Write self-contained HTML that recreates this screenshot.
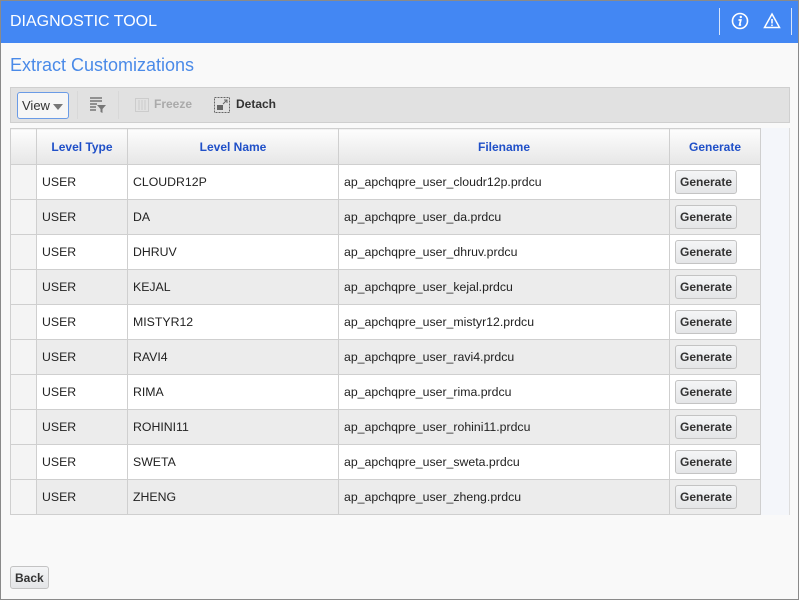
<!DOCTYPE html>
<html><head><style>
*{box-sizing:border-box;margin:0;padding:0}
body{width:799px;height:600px;background:#f9f9f9;font-family:"Liberation Sans",Arial,sans-serif;position:relative;overflow:hidden}
.frame{position:absolute;inset:0;border:1px solid #8a8a8a;pointer-events:none;z-index:9}
.hdr{position:absolute;left:0;top:0;width:799px;height:43px;background:#4387f3;color:#fff;font-size:16px;line-height:43px;padding-left:10px}
.sep{position:absolute;top:8px;width:1px;height:27px;background:#d5e4fc}
.title{position:absolute;left:10px;top:55px;font-size:18px;color:#4a8ae8}
.tb{position:absolute;left:10px;top:87px;width:780px;height:36px;background:#e1e1e1;border:1px solid #cfcfcf}
.view{position:absolute;left:6px;top:4px;width:52px;height:27px;border:1px solid #6a9be6;border-radius:3px;background:#f6f6f6;font-size:13px;line-height:25px;padding-left:4px;color:#333}
.tri{position:absolute;right:5px;top:11px;border-left:5px solid transparent;border-right:5px solid transparent;border-top:6px solid #777}
.tbt{position:absolute;top:9px;font-size:12px;font-weight:bold}
.side{position:absolute;left:760px;top:128px;width:30px;height:387px;background:#f4f6fa;border-right:1px solid #ddd}
table{position:absolute;left:10px;top:128px;border-collapse:collapse;font-size:12.3px;color:#222}
td,th{border:1px solid #cfcfcf;height:35px;padding:0 5px;text-align:left}
th{height:36px;background:linear-gradient(#fdfdfd,#e6e6e6);color:#2050c8;text-align:center;font-size:12px}
tr:nth-child(odd) td{background:#ececec}
tr:nth-child(even) td{background:#fff}
td.rn{background:#f4f4f4 !important}
.btn{display:inline-block;border:1px solid #c3c3c3;border-radius:3px;background:linear-gradient(#f4f5f6,#e4e5e7);font-weight:bold;font-size:12px;padding:0 4px;height:24px;line-height:22px;color:#333}
</style></head><body>
<div class="frame"></div>
<div class="hdr">DIAGNOSTIC TOOL
<div class="sep" style="left:719px"></div><div class="sep" style="left:791px"></div>
<svg style="position:absolute;left:731px;top:12px" width="18" height="18" viewBox="0 0 18 18"><circle cx="9" cy="9" r="7.5" fill="none" stroke="#fff" stroke-width="1.6"/><circle cx="9.8" cy="5" r="1.2" fill="#fff"/><path d="M7.5 8h2.3l-1.2 5h1.5" fill="none" stroke="#fff" stroke-width="1.7"/></svg>
<svg style="position:absolute;left:763px;top:12px" width="18" height="18" viewBox="0 0 18 18"><path d="M9 2L16.5 15.5H1.5Z" fill="none" stroke="#fff" stroke-width="1.5"/><path d="M9 7v4.5" stroke="#fff" stroke-width="1.6"/><circle cx="9" cy="13.3" r="0.9" fill="#fff"/></svg>
</div>
<div class="title">Extract Customizations</div>
<div class="tb">
<div class="view">View<span class="tri"></span></div>
<div style="position:absolute;left:66px;top:3px;width:1px;height:28px;background:#d8d8d8"></div>
<svg style="position:absolute;left:78px;top:9px" width="17" height="16" viewBox="0 0 17 16"><path d="M1 1h12M1 4h12M1 7h7M1 10h6M1 13h6" stroke="#777" stroke-width="1.5"/><path d="M8 8h9l-3.5 4v4l-2-1v-3Z" fill="#777"/></svg>
<div style="position:absolute;left:107px;top:3px;width:1px;height:28px;background:#d8d8d8"></div>
<svg style="position:absolute;left:124px;top:10px" width="14" height="14"><rect x="0.5" y="0.5" width="13" height="13" fill="none" stroke="#ccc"/><path d="M4 2v10M7 2v10M10 2v10" stroke="#ccc"/></svg>
<span class="tbt" style="left:143px;color:#aaa">Freeze</span>
<svg style="position:absolute;left:203px;top:9px" width="16" height="16"><rect x="0.5" y="0.5" width="15" height="15" fill="none" stroke="#666" stroke-dasharray="2,1"/><rect x="3" y="8" width="6" height="5" fill="#666"/><path d="M9 7l4-4M10 3h3v3" stroke="#666" fill="none"/></svg>
<span class="tbt" style="left:225px;color:#333">Detach</span>
</div>
<div class="side"></div>
<table>
<tr><th style="width:26px"></th><th style="width:91px">Level Type</th><th style="width:211px">Level Name</th><th style="width:331px">Filename</th><th style="width:91px">Generate</th></tr>
<tr><td class="rn"></td><td>USER</td><td>CLOUDR12P</td><td>ap_apchqpre_user_cloudr12p.prdcu</td><td><span class="btn">Generate</span></td></tr>
<tr><td class="rn"></td><td>USER</td><td>DA</td><td>ap_apchqpre_user_da.prdcu</td><td><span class="btn">Generate</span></td></tr>
<tr><td class="rn"></td><td>USER</td><td>DHRUV</td><td>ap_apchqpre_user_dhruv.prdcu</td><td><span class="btn">Generate</span></td></tr>
<tr><td class="rn"></td><td>USER</td><td>KEJAL</td><td>ap_apchqpre_user_kejal.prdcu</td><td><span class="btn">Generate</span></td></tr>
<tr><td class="rn"></td><td>USER</td><td>MISTYR12</td><td>ap_apchqpre_user_mistyr12.prdcu</td><td><span class="btn">Generate</span></td></tr>
<tr><td class="rn"></td><td>USER</td><td>RAVI4</td><td>ap_apchqpre_user_ravi4.prdcu</td><td><span class="btn">Generate</span></td></tr>
<tr><td class="rn"></td><td>USER</td><td>RIMA</td><td>ap_apchqpre_user_rima.prdcu</td><td><span class="btn">Generate</span></td></tr>
<tr><td class="rn"></td><td>USER</td><td>ROHINI11</td><td>ap_apchqpre_user_rohini11.prdcu</td><td><span class="btn">Generate</span></td></tr>
<tr><td class="rn"></td><td>USER</td><td>SWETA</td><td>ap_apchqpre_user_sweta.prdcu</td><td><span class="btn">Generate</span></td></tr>
<tr><td class="rn"></td><td>USER</td><td>ZHENG</td><td>ap_apchqpre_user_zheng.prdcu</td><td><span class="btn">Generate</span></td></tr>
</table>
<span class="btn" style="position:absolute;left:10px;top:566px;height:23px">Back</span>
</body></html>
